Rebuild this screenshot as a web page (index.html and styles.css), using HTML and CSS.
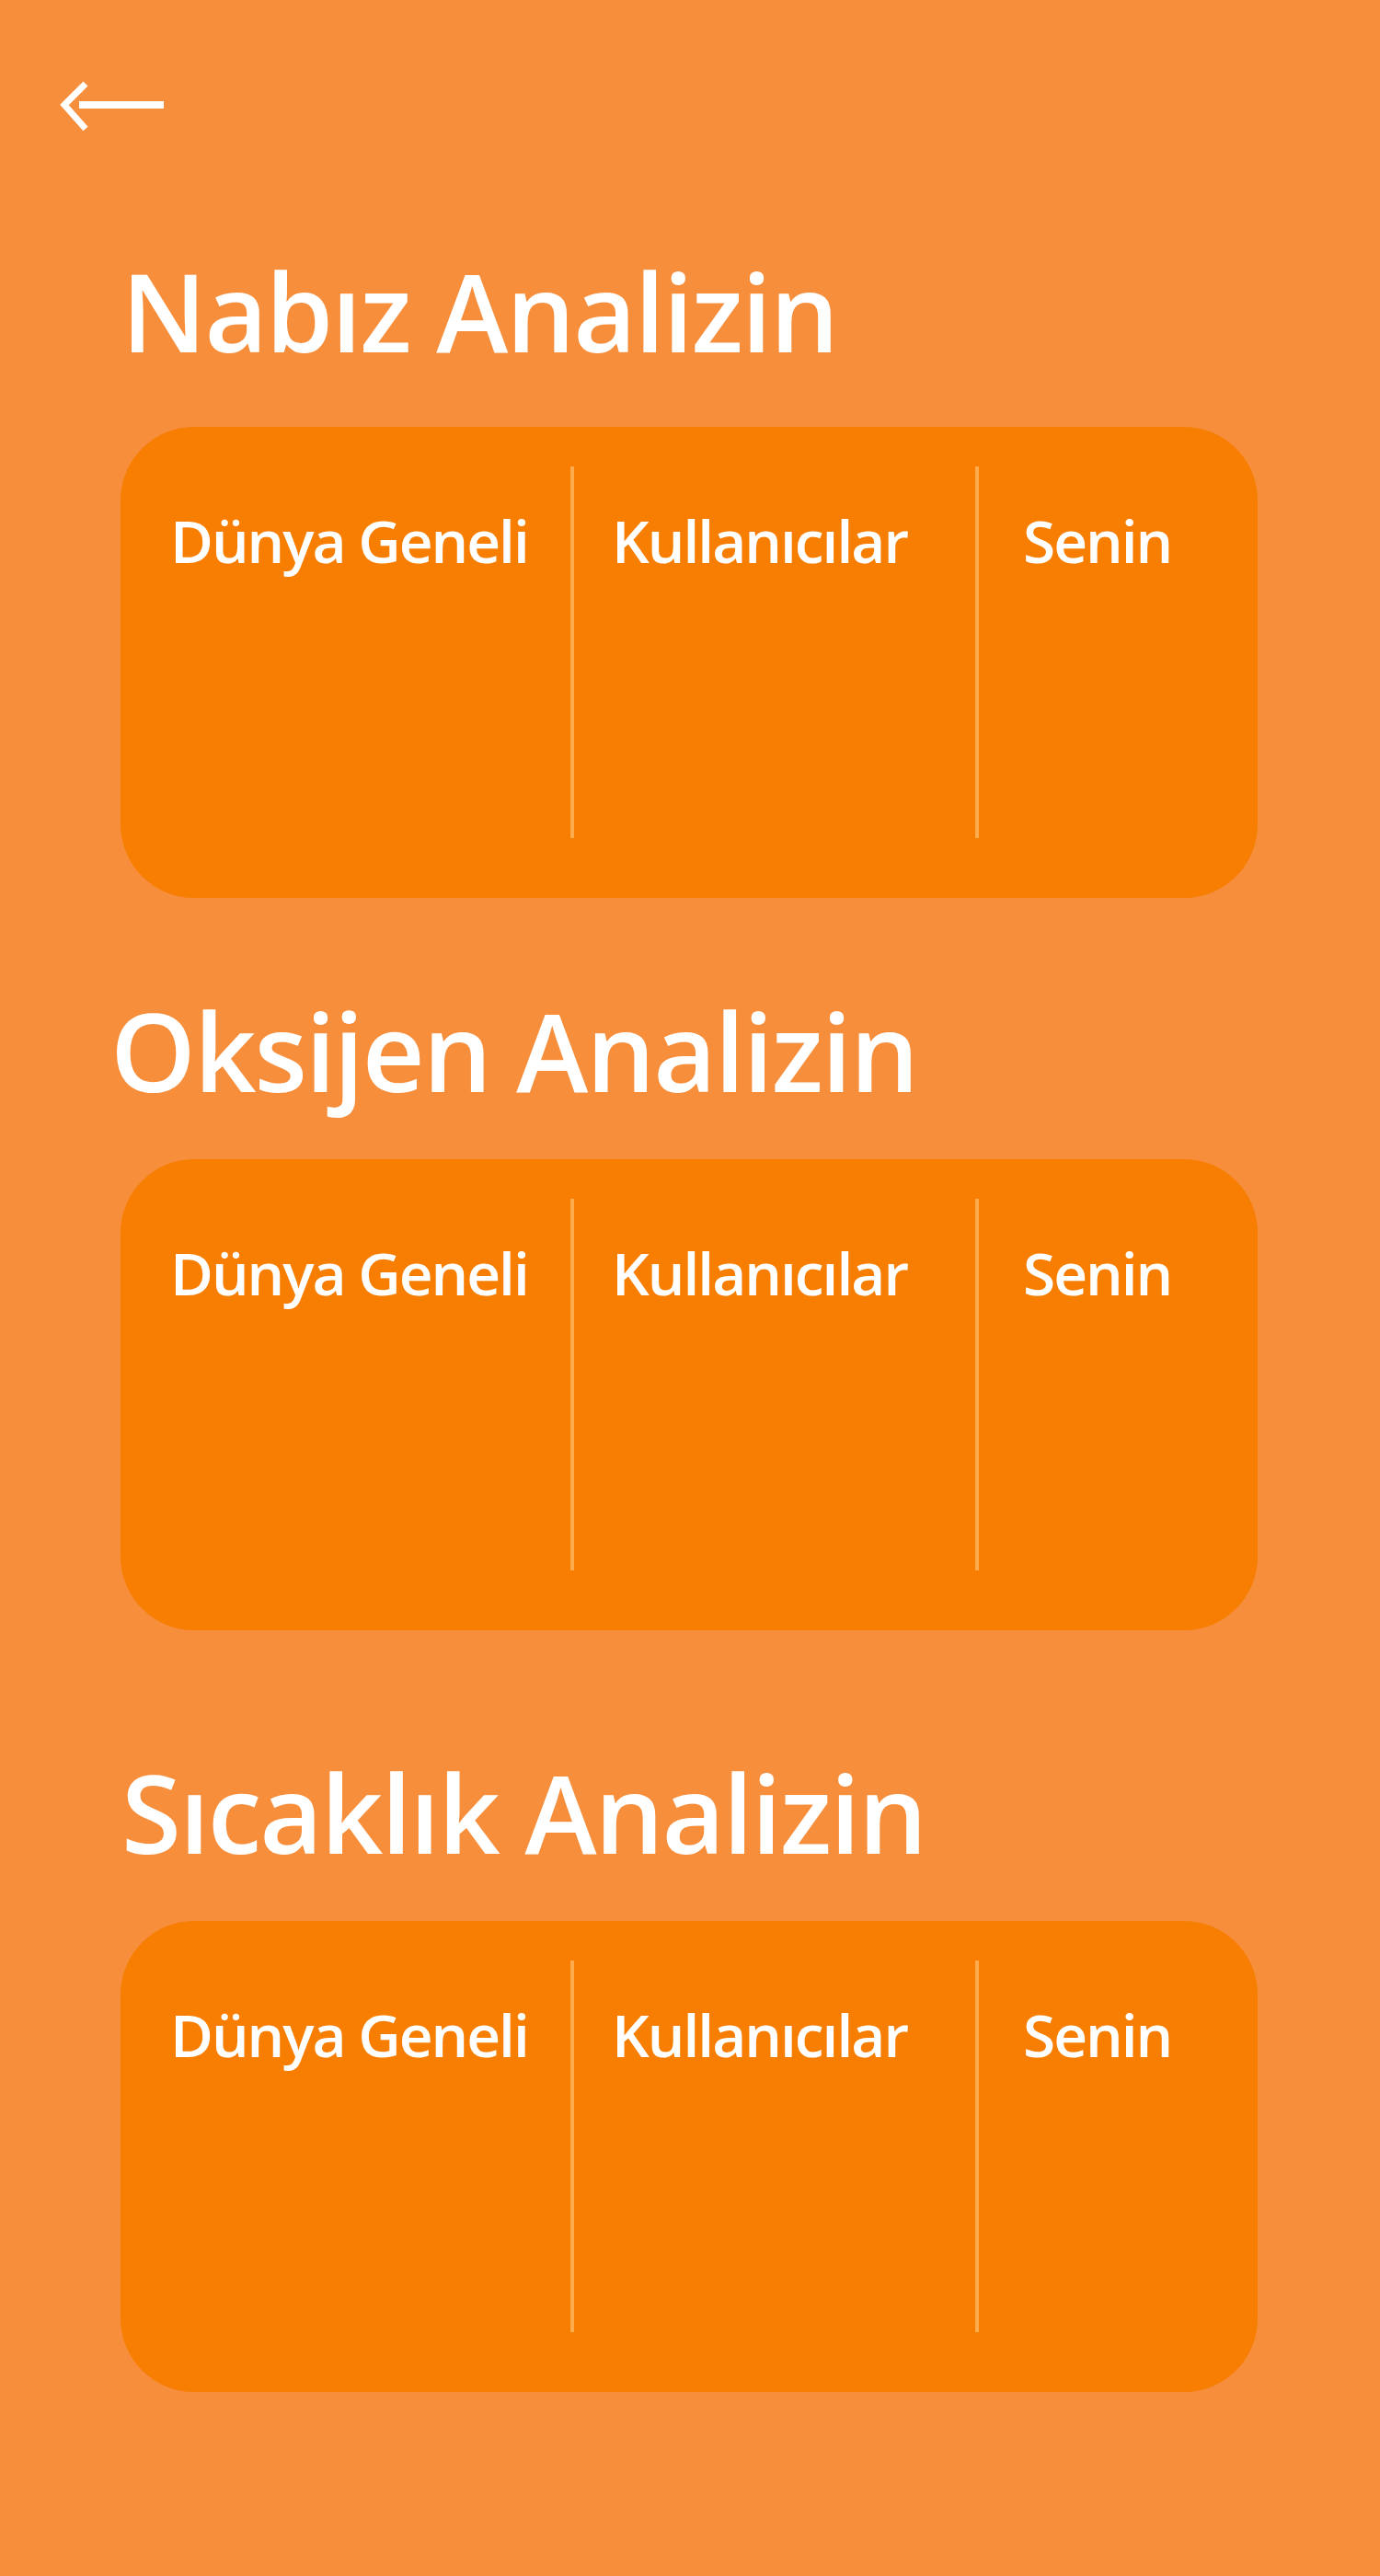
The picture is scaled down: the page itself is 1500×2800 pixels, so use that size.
FILE: index.html
```html
<!DOCTYPE html>
<html lang="tr">
<head>
<meta charset="utf-8">
<title>Analiz</title>
<link rel="stylesheet" href="styles.css">
</head>
<body>
<div class="page">
  <header class="header">
    <svg class="back" width="130" height="70" viewBox="0 0 130 70" aria-label="Geri">
      <polyline points="33,11 10,34 33,60" fill="none" stroke="#fff" stroke-width="7" stroke-linecap="butt" stroke-linejoin="miter"/>
      <path d="M26 34 H118" stroke="#fff" stroke-width="8"/>
    </svg>
  </header>

  <section class="section s1">
    <h2 class="title t1">Nabız Analizin</h2>
    <div class="card">
      <div class="col c1"><span class="label">Dünya Geneli</span></div>
      <div class="divider"></div>
      <div class="col c2"><span class="label">Kullanıcılar</span></div>
      <div class="divider"></div>
      <div class="col c3"><span class="label">Senin</span></div>
    </div>
  </section>

  <section class="section s2">
    <h2 class="title t2">Oksijen Analizin</h2>
    <div class="card">
      <div class="col c1"><span class="label">Dünya Geneli</span></div>
      <div class="divider"></div>
      <div class="col c2"><span class="label">Kullanıcılar</span></div>
      <div class="divider"></div>
      <div class="col c3"><span class="label">Senin</span></div>
    </div>
  </section>

  <section class="section s3">
    <h2 class="title t3">Sıcaklık Analizin</h2>
    <div class="card">
      <div class="col c1"><span class="label">Dünya Geneli</span></div>
      <div class="divider"></div>
      <div class="col c2"><span class="label">Kullanıcılar</span></div>
      <div class="divider"></div>
      <div class="col c3"><span class="label">Senin</span></div>
    </div>
  </section>
</div>
</body>
</html>
```

FILE: styles.css
```css
html, body {
  margin: 0;
  padding: 0;
}
body {
  background: #F68E3C;
  font-family: "Open Sans", "Noto Sans", "Liberation Sans", sans-serif;
  color: #fff;
}
.page {
  width: 1500px;
  min-height: 2800px;
  background: #F68E3C;
}
.header {
  padding: 80px 0 0 60px;
  height: 70px;
}
.back {
  display: block;
}
.title {
  margin: 0;
  font-size: 118px;
  line-height: 118px;
  font-weight: 600;
  letter-spacing: -2px;
  color: #fff;
  white-space: nowrap;
}
.t1 { margin-top: 129px; margin-left: 132px; }
.t2 { margin-top: 107px; margin-left: 120px; }
.t3 { margin-top: 139px; margin-left: 132px; }

.card {
  margin-left: 131px;
  width: 1236px;
  height: 512px;
  box-sizing: border-box;
  padding: 43px 0 65px 0;
  background: #F77E00;
  border-radius: 80px;
  display: grid;
  grid-template-columns: 489px 4px 436px 4px 1fr;
}
.s1 .card { margin-top: 67px; }
.s2 .card { margin-top: 59px; }
.s3 .card { margin-top: 59px; }

.divider {
  background: #FFAA4C;
}
.col {
  padding-top: 49px;
}
.label {
  display: block;
  font-size: 64px;
  line-height: 64px;
  font-weight: 600;
  letter-spacing: -2px;
  white-space: nowrap;
}
.c1 { padding-left: 54px; }
.c2 { padding-left: 41px; }
.c3 { padding-left: 48px; }
```
